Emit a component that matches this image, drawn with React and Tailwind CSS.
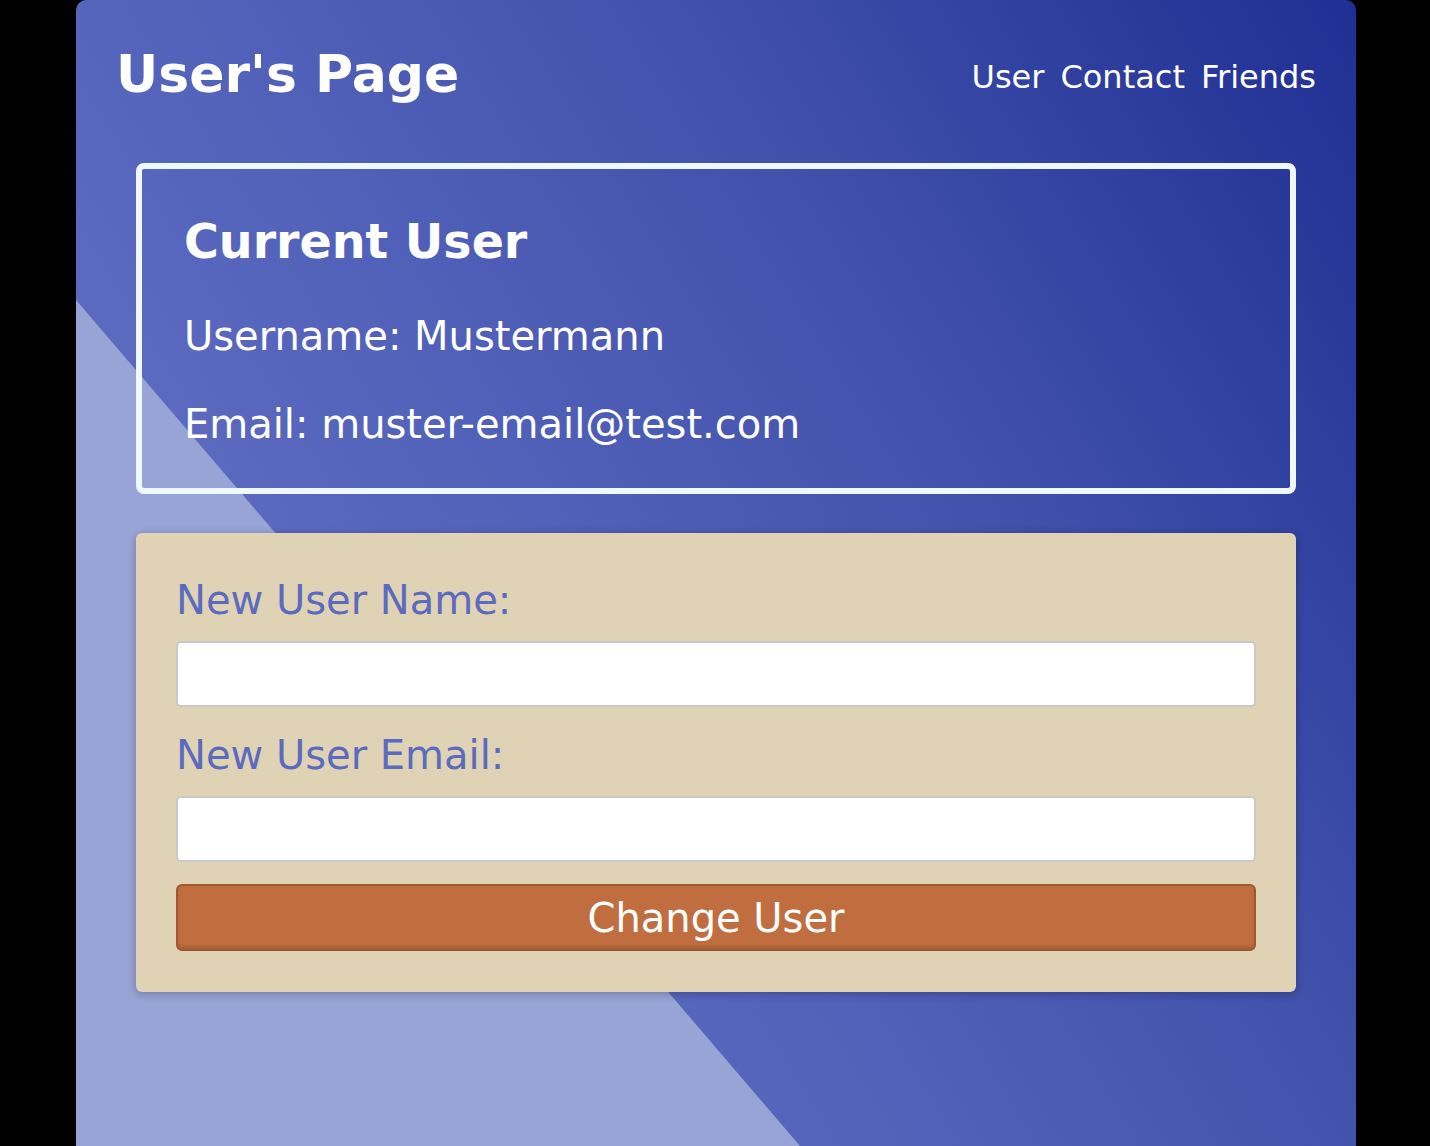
import React, { useState } from 'react';

/**
 * Página de usuario: datos actuales y formulario para cambiarlos
 */
function App() {
    const [name, setName] = useState('');
    const [email, setEmail] = useState('');

    return (
        <div className="min-h-screen bg-black leading-[normal]" style={{ fontFamily: '"DejaVu Sans", Verdana, sans-serif' }}>
            <div className="relative ml-[76px] min-h-screen w-[1280px] overflow-hidden rounded-t-[10px] bg-[linear-gradient(58deg,#6b7ac6_0%,#5665bc_36%,#4353ad_64%,#1f2f93_100%)]">
                <div className="absolute inset-0 bg-[#99a4d6] [clip-path:polygon(0_300px,724px_1146px,724px_2000px,0_2000px)]" />

                <div className="relative">
                    <header className="flex h-[163px] items-start justify-between px-10 pt-[44px]">
                        <h1 className="text-[52px] font-bold text-white">User's Page</h1>
                        <nav className="flex gap-[16px] pt-[14px] text-[32px] text-white">
                            <a href="#">User</a>
                            <a href="#">Contact</a>
                            <a href="#">Friends</a>
                        </nav>
                    </header>

                    <section className="mx-[60px] flex flex-col rounded-[8px] border-[6px] border-[#f0f8ff] px-[42px] pt-[45px] pb-[41px] text-white">
                        <h2 className="mb-[44px] text-[47.5px] font-bold">Current User</h2>
                        <p className="mb-[42px] text-[40px]">Username: Mustermann</p>
                        <p className="text-[40px]">Email: muster-email@test.com</p>
                    </section>

                    <form
                        onSubmit={(e) => e.preventDefault()}
                        className="mx-[60px] mt-[39px] flex flex-col rounded-[6px] bg-[#e0d2b4] px-10 pt-[44px] pb-[41px] shadow-[0_2px_8px_rgba(0,0,0,0.25)]"
                    >
                        <label className="text-[40px] text-[#5a6bc0]">New User Name:</label>
                        <input
                            value={name}
                            onChange={(e) => setName(e.target.value)}
                            className="mt-[18px] h-[66px] rounded-[5px] border-2 border-[#c9c9c9] bg-white px-3 text-[32px] outline-none"
                        />
                        <label className="mt-[25px] text-[40px] text-[#5a6bc0]">New User Email:</label>
                        <input
                            value={email}
                            onChange={(e) => setEmail(e.target.value)}
                            className="mt-[18px] h-[66px] rounded-[5px] border-2 border-[#c9c9c9] bg-white px-3 text-[32px] outline-none"
                        />
                        <button
                            type="submit"
                            className="mt-[22px] h-[67px] rounded-[6px] border-2 border-[#a0572f] bg-[#c06e3f] text-[40px] text-white shadow-[inset_0_-3px_3px_rgba(0,0,0,0.12)]"
                        >
                            Change User
                        </button>
                    </form>
                </div>
            </div>
        </div>
    );
}

export default App;
